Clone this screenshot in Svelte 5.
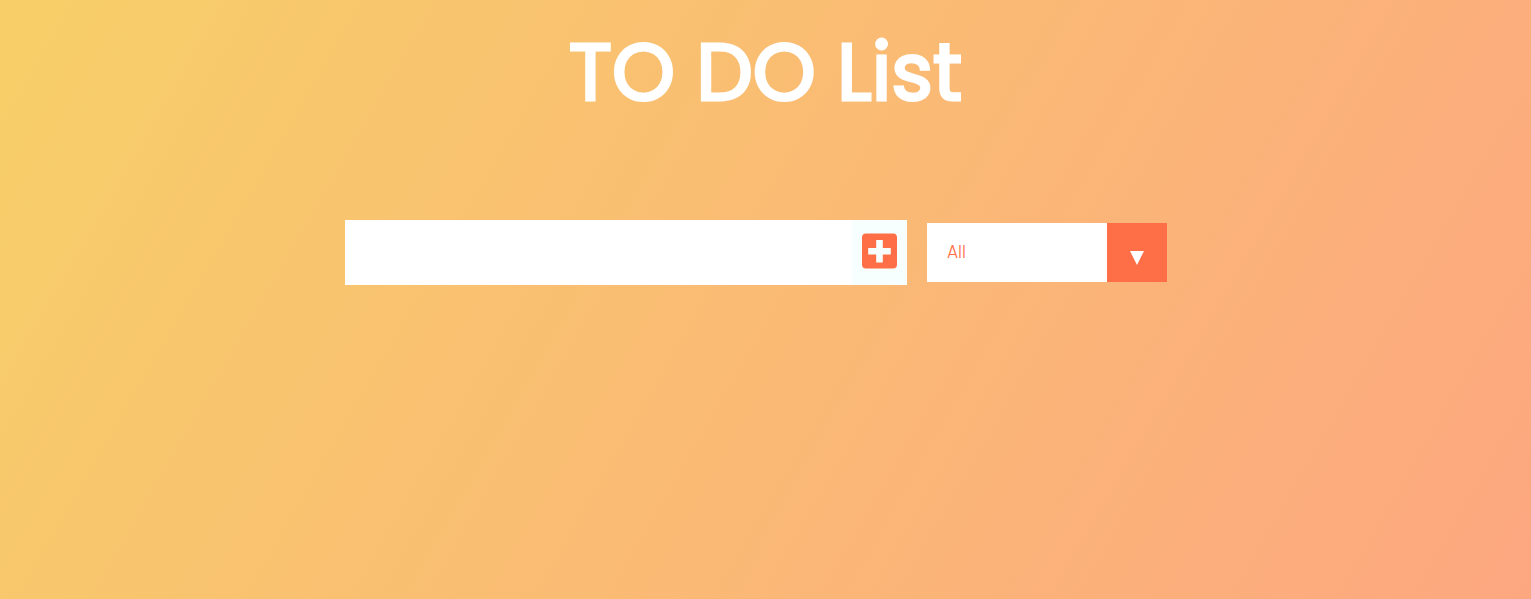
<script>
  let task = $state('');
  let filter = $state('all');
  let tasks = $state([]);

  const shown = $derived(
    tasks.filter((t) => filter === 'all' || (filter === 'completed') === t.done)
  );

  function add(event) {
    event.preventDefault();
    if (!task.trim()) return;
    tasks.push({ text: task.trim(), done: false });
    task = '';
  }
</script>

<header>
  <h1>TO DO List</h1>
</header>

<form onsubmit={add}>
  <div class="entry">
    <input type="text" aria-label="New task" bind:value={task} />
    <button type="submit" aria-label="Add task">
      <svg viewBox="0 0 35 36" aria-hidden="true">
        <path fill-rule="evenodd" d="M4 0.500H31Q35 0.500 35 4.500V31.500Q35 35.500 31 35.500H4Q0 35.500 0 31.500V4.500Q0 0.500 4 0.500ZM14.200 7V15H6.200V21.500H14.200V29.500H20.800V21.500H28.800V15H20.800V7Z" />
      </svg>
    </button>
  </div>
  <div class="filter">
    <select aria-label="Filter tasks" bind:value={filter}>
      <option value="all">All</option>
      <option value="completed">Completed</option>
      <option value="uncompleted">Uncompleted</option>
    </select>
    <span class="arrow" aria-hidden="true">
      <svg viewBox="0 0 14 14"><path d="M0 0H14L7 14Z" /></svg>
    </span>
  </div>
</form>

<ul>
  {#each shown as item}
    <li><label><input type="checkbox" bind:checked={item.done} /> {item.text}</label></li>
  {/each}
</ul>

<style>
  :global(body) {
    min-height: 100vh;
    background: linear-gradient(120deg, #f7cf68 0%, #fda780 100%);
    color: white;
    font-family: Poppins, Inter, sans-serif;
  }

  header {
    display: flex;
    justify-content: center;
    padding: 16px;
  }

  h1 {
    margin: 0;
    font-size: 80px;
    font-weight: 400;
    line-height: 112px;
    white-space: nowrap;
    -webkit-text-stroke: 3px white;
  }

  form {
    display: flex;
    justify-content: center;
    align-items: center;
    gap: 20px;
    padding: 76px 19px 0 0;
  }

  .entry {
    display: flex;
    width: 562px;
    height: 65px;
    background: white;
  }

  .entry input {
    flex: 1;
    min-width: 0;
    padding: 16px;
    border: 0;
    outline: 0;
    background: transparent;
    color: #ff6f47;
    font: inherit;
    font-size: 24px;
  }

  button {
    display: flex;
    align-items: center;
    padding: 0 10px 3px;
    border: 0;
    background: #f7fffe;
    cursor: pointer;
  }

  button svg {
    width: 35px;
    height: 36px;
    fill: #ff6f47;
  }

  .filter {
    display: flex;
    width: 240px;
    height: 59px;
  }

  select {
    appearance: none;
    flex: 1;
    min-width: 0;
    padding: 0 20px 2px;
    border: 0;
    border-radius: 0;
    outline: 0;
    background: white;
    color: #ff6f47;
    font-family: inherit;
    font-size: 17px;
    font-weight: 300;
  }

  .arrow {
    display: flex;
    justify-content: center;
    align-items: center;
    width: 60px;
    padding-top: 10px;
    box-sizing: border-box;
    background: #ff6f47;
    pointer-events: none;
  }

  .arrow svg {
    width: 14px;
    height: 14px;
    fill: white;
  }

  ul {
    width: 562px;
    max-width: 100%;
    margin: 0 auto;
    padding: 0;
    list-style: none;
  }
</style>
